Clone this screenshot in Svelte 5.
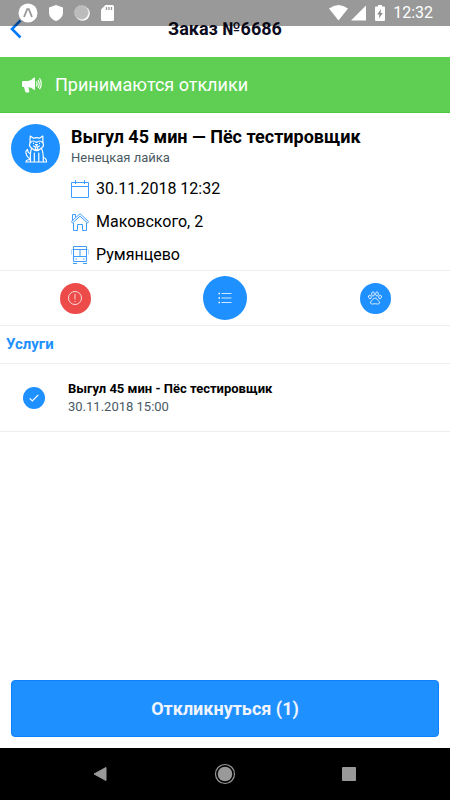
<script lang="ts">
	let activeTab = 'services';

	const order = {
		number: 6686,
		status: 'Принимаются отклики',
		title: 'Выгул 45 мин — Пёс тестировщик',
		breed: 'Ненецкая лайка',
		date: '30.11.2018 12:32',
		address: 'Маковского, 2',
		metro: 'Румянцево'
	};

	let services = [
		{ id: 1, name: 'Выгул 45 мин - Пёс тестировщик', date: '30.11.2018 15:00', checked: true }
	];

	$: selected = services.filter((s) => s.checked).length;
</script>

<div class="screen">
	<div class="status-bar">
		<div class="status-icons left">
			<svg width="20" height="20" viewBox="0 0 20 20">
				<circle cx="10" cy="10" r="9.5" fill="#fff" />
				<path d="M6 14 L9.2 6.2 H10.8 L14 14" fill="none" stroke="#999" stroke-width="1.8" />
			</svg>
			<svg width="14" height="16" viewBox="0 0 14 16">
				<path d="M7 0 L14 2.6 V7.5 C14 11.5 11 14.8 7 16 C3 14.8 0 11.5 0 7.5 V2.6 Z" fill="#fff" />
			</svg>
			<svg width="16" height="16" viewBox="0 0 16 16">
				<circle cx="8.5" cy="8.5" r="7.3" fill="#fff" />
				<circle cx="7.5" cy="7.5" r="6.9" fill="#bbb" stroke="#d8d8d8" stroke-dasharray="1 1" />
			</svg>
			<svg width="13" height="16" viewBox="0 0 13 16">
				<path d="M4.5 0 H11.5 Q13 0 13 1.5 V14.5 Q13 16 11.5 16 H1.5 Q0 16 0 14.5 V4.5 Z" fill="#fff" />
				<path d="M5.5 2 V5 M8 2 V5 M10.5 2 V5" stroke="#999" stroke-width="1.3" />
			</svg>
		</div>
		<div class="status-icons right">
			<svg width="19" height="16" viewBox="0 0 19 16">
				<path d="M0 3.5 Q9.5 -3.5 19 3.5 L9.5 15.5 Z" fill="#fff" />
			</svg>
			<svg width="15" height="16" viewBox="0 0 15 16">
				<path d="M15 0.5 V15.5 H0 Z" fill="#fff" />
			</svg>
			<svg class="battery" width="10" height="16" viewBox="0 0 10 16">
				<path d="M3 0 H7 V1.5 H9 Q10 1.5 10 2.5 V15 Q10 16 9 16 H1 Q0 16 0 15 V2.5 Q0 1.5 1 1.5 H3 Z" fill="#fff" />
				<path d="M6 4 L2.3 9.5 H4.5 L4 13.5 L7.7 8 H5.5 Z" fill="#888" />
			</svg>
			<span class="clock">12:32</span>
		</div>
	</div>

	<header>
		<button class="back" aria-label="Назад">
			<svg width="12" height="20" viewBox="0 0 12 20">
				<path d="M10.5 1.5 L2 10 L10.5 18.5" fill="none" stroke="#007aff" stroke-width="2.6" />
			</svg>
		</button>
		<h1>Заказ №{order.number}</h1>
	</header>

	<div class="banner">
		<svg width="20" height="16" viewBox="0 0 20 16">
			<path d="M0 5 Q0 4 1 4 H6 Q9.5 3.5 12 0.5 Q13 0 13 1.5 V12 Q13 13.5 12 12.7 Q9.5 10.5 6.5 10 L7.3 14.5 Q7.3 15.5 6.3 15.5 H4.5 Q3.5 15.5 3.2 14.5 L2 10 H1 Q0 10 0 9 Z" fill="#fff" />
			<path d="M14.3 4.5 Q15.8 6.8 14.3 9.2 M16 3 Q18.3 6.8 16 10.7 M17.5 1.3 Q21 6.8 17.5 12.2" fill="none" stroke="#fff" stroke-width="1.2" />
		</svg>
		<span>{order.status}</span>
	</div>

	<section class="order">
		<div class="avatar">
			<svg width="22" height="28" viewBox="0 0 22 28" fill="none" stroke="#fff" stroke-width="1.2" stroke-linejoin="round" stroke-linecap="round">
				<path d="M5 8 L5.2 1 L8.5 3.2 Q11.5 2.2 14.5 3.2 L17.8 1 L18 8 Q19.5 11 16.5 13 Q11.5 18 6.5 13 Q3.5 11 5 8 Z" />
				<path d="M5.5 7.5 Q8 4.5 11.5 7.5 Q15 4.5 17.5 7.5" />
				<path d="M8.5 8 V8.5 M14.5 8 V8.5 M10.5 9.5 H12.5 L11.5 10.5 Z M8.5 11 Q11.5 13 14.5 11 M10.3 12 V14 Q11.5 15 12.7 14 V12" />
				<path d="M6.5 13.5 Q5 17 5.5 26.5 M16.5 13.5 Q18.5 17 18.3 26.5 M9.3 18 V26.5 M13.8 18 V26.5" />
				<path d="M5.5 24 Q1.5 22 1 18 Q0.5 15.5 2.5 14.5 Q2.5 17.5 5 18.5" />
				<path d="M1 27 Q1 24.5 5.5 24.5 M18.3 22.5 Q21.5 23 21.5 27 M1 27 H21.5" />
			</svg>
		</div>
		<div class="details">
			<h2>{order.title}</h2>
			<p class="breed">{order.breed}</p>
			<ul>
				<li>
					<svg width="18" height="18" viewBox="0 0 18 18">
						<path d="M0.5 2.5 H17.5 V17.5 H0.5 Z M0.5 6.5 H17.5 M4.5 0 V4 M13.5 0 V4" />
					</svg>
					<span>{order.date}</span>
				</li>
				<li>
					<svg width="18" height="18" viewBox="0 0 18 18">
						<path d="M0.5 8.5 L9 0.7 L17.5 8.5 L16.5 10 L9 3.2 L1.5 10 Z M2.5 10 V17.5 H6.5 V11.5 H11.5 V17.5 H15.5 V10 M1.5 7 V1.5 H4.5 V4" />
					</svg>
					<span>{order.address}</span>
				</li>
				<li>
					<svg width="18" height="18" viewBox="0 0 18 18">
						<path d="M2.5 0.5 H15.5 V15.5 H2.5 Z M2.5 3.5 H15.5 M9 3.5 V10.5 M2.5 10.5 H15.5 M4.5 13 H6 M12 13 H13.5 M2 17.5 H6 M12 17.5 H16" />
						<path class="faint" d="M2 3.5 H0.5 V8.5 M16 3.5 H17.5 V8.5" />
					</svg>
					<span>{order.metro}</span>
				</li>
			</ul>
		</div>
	</section>

	<nav class="tabs">
		<button class="tab danger" class:active={activeTab === 'problem'} aria-label="Проблема" on:click={() => (activeTab = 'problem')}>
			<svg width="14" height="14" viewBox="0 0 14 14">
				<circle cx="7" cy="7" r="6.5" />
				<path d="M7 3 V8.5 M7 10 V11" />
			</svg>
		</button>
		<button class="tab" class:active={activeTab === 'services'} aria-label="Услуги" on:click={() => (activeTab = 'services')}>
			<svg width="14" height="14" viewBox="0 0 14 14">
				<path d="M3.5 2.5 H13.5 M3.5 7 H13.5 M3.5 11.5 H13.5" />
				<path d="M0.5 2.5 H2 M0.5 7 H2 M0.5 11.5 H2" stroke-width="1.6" />
			</svg>
		</button>
		<button class="tab" class:active={activeTab === 'pet'} aria-label="Питомец" on:click={() => (activeTab = 'pet')}>
			<svg width="14" height="14" viewBox="0 0 14 14">
				<ellipse cx="1.9" cy="6" rx="1.3" ry="1.9" transform="rotate(-20 1.9 6)" />
				<ellipse cx="5" cy="3" rx="1.4" ry="2.1" />
				<ellipse cx="9" cy="3" rx="1.4" ry="2.1" />
				<ellipse cx="12.1" cy="6" rx="1.3" ry="1.9" transform="rotate(20 12.1 6)" />
				<path d="M7 7 Q8.5 7 9.5 9 Q12 10.5 11.5 12 Q11 13.5 9 13 Q7 12.4 5 13 Q3 13.5 2.5 12 Q2 10.5 4.5 9 Q5.5 7 7 7 Z" />
			</svg>
		</button>
	</nav>

	<main>
		<h3>Услуги</h3>
		{#each services as service (service.id)}
			<label class="service">
				<input type="checkbox" bind:checked={service.checked} />
				<span class="check">
					<svg width="10" height="8" viewBox="0 0 10 8">
						<path d="M0.7 4.3 L3.3 7 L9.3 0.8" fill="none" stroke="#fff" stroke-width="1.2" />
					</svg>
				</span>
				<span class="service-text">
					<b>{service.name}</b>
					<small>{service.date}</small>
				</span>
			</label>
		{/each}
	</main>

	<div class="footer">
		<button class="respond">Откликнуться ({selected})</button>
	</div>

	<div class="android-nav">
		<button aria-label="Системная кнопка «Назад»">
			<svg width="22" height="22" viewBox="0 0 22 22">
				<path d="M16 4.5 V17.5 L4 11 Z" fill="#999" stroke="#999" stroke-linejoin="round" />
			</svg>
		</button>
		<button aria-label="Домой">
			<svg width="22" height="22" viewBox="0 0 22 22">
				<circle cx="11" cy="11" r="9.5" fill="none" stroke="#999" stroke-width="1.2" />
				<circle cx="11" cy="11" r="7.3" fill="#999" />
			</svg>
		</button>
		<button aria-label="Недавние">
			<svg width="22" height="22" viewBox="0 0 22 22">
				<rect x="4" y="4" width="14" height="14" rx="1" fill="#999" />
			</svg>
		</button>
	</div>
</div>

<style>
	:global(body) {
		background: #fff;
	}

	.screen {
		position: relative;
		display: flex;
		flex-direction: column;
		min-height: 100vh;
		font-family: Roboto, 'Noto Sans', sans-serif;
		color: #000;
	}

	svg {
		display: block;
		flex: none;
	}

	button {
		padding: 0;
		border: 0;
		background: none;
		font-family: inherit;
		cursor: pointer;
	}

	h1,
	h2,
	h3,
	p,
	ul {
		margin: 0;
		padding: 0;
	}

	.status-bar {
		position: absolute;
		top: 0;
		left: 0;
		right: 0;
		z-index: 1;
		display: flex;
		justify-content: space-between;
		align-items: center;
		height: 26px;
		padding: 0 17px 0 18px;
		background: rgba(0, 0, 0, 0.4);
		color: #fff;
		pointer-events: none;
	}

	.status-icons {
		display: flex;
		align-items: center;
	}

	.left {
		gap: 11px;
	}

	.right {
		gap: 3px;
	}

	.battery {
		margin: 0 5px 0 6px;
	}

	.clock {
		font-size: 16px;
		line-height: 26px;
	}

	header {
		display: grid;
		grid-template-columns: 40px 1fr 40px;
		align-items: center;
		height: 57px;
	}

	.back {
		padding-left: 10px;
		justify-self: start;
	}

	h1 {
		font-size: 18px;
		line-height: 24px;
		font-weight: 700;
		text-align: center;
		color: #0c0c1e;
	}

	.banner {
		display: flex;
		align-items: center;
		gap: 13px;
		height: 55px;
		padding: 0 22px;
		border-bottom: 1px solid #4cc93f;
		background: #5fcf53;
		color: #fff;
		font-size: 18px;
	}

	.order {
		display: flex;
		gap: 11px;
		padding: 11px 11px 3px;
		border-bottom: 1px solid #eceef1;
	}

	.avatar {
		display: flex;
		flex: none;
		align-items: center;
		justify-content: center;
		width: 49px;
		height: 49px;
		border-radius: 50%;
		background: #1e90ff;
	}

	h2 {
		font-size: 18px;
		line-height: 26px;
		font-weight: 700;
	}

	.breed {
		font-size: 13px;
		line-height: 16px;
		color: #4a5a64;
	}

	ul {
		display: grid;
		gap: 9px;
		padding-top: 11px;
		list-style: none;
	}

	li {
		display: flex;
		align-items: center;
		gap: 7px;
		font-size: 16px;
		line-height: 24px;
	}

	li svg {
		fill: none;
		stroke: #3f9cff;
	}

	.faint {
		stroke: #b5d8ff;
	}

	.tabs {
		display: grid;
		grid-template-columns: repeat(3, 1fr);
		place-items: center;
		height: 54px;
		border-bottom: 1px solid #eceef1;
	}

	.tab {
		display: flex;
		align-items: center;
		justify-content: center;
		width: 31px;
		height: 31px;
		border-radius: 50%;
		background: #1e90ff;
	}

	.tab.danger {
		background: #ec4b49;
	}

	.tab.active {
		width: 44px;
		height: 44px;
	}

	.tab svg {
		fill: none;
		stroke: #fff;
		stroke-width: 0.8;
	}

	main {
		flex: 1;
	}

	h3 {
		padding: 0 6px;
		border-bottom: 1px solid #eceef1;
		font-size: 15px;
		line-height: 37px;
		font-weight: 700;
		color: #1e90ff;
	}

	.service {
		position: relative;
		display: flex;
		align-items: center;
		gap: 23px;
		height: 67px;
		padding: 0 23px;
		border-bottom: 1px solid #eceef1;
	}

	.service input {
		position: absolute;
		width: 22px;
		height: 22px;
		margin: 0;
		opacity: 0;
	}

	.check {
		display: flex;
		align-items: center;
		justify-content: center;
		width: 22px;
		height: 22px;
		border-radius: 50%;
		background: #ccd3da;
	}

	input:checked + .check {
		background: #1e90ff;
	}

	.service-text {
		display: grid;
		font-size: 13px;
		line-height: 18px;
	}

	small {
		font-size: 13px;
		color: #4a5a64;
	}

	.footer {
		padding: 11px;
	}

	.respond {
		width: 100%;
		height: 57px;
		border: 1px solid #0f80ff;
		border-radius: 4px;
		background: #1e90ff;
		color: #f0f4ff;
		font-size: 18px;
		font-weight: 700;
	}

	.android-nav {
		display: flex;
		align-items: center;
		justify-content: center;
		gap: 102px;
		height: 52px;
		background: #000;
	}
</style>
